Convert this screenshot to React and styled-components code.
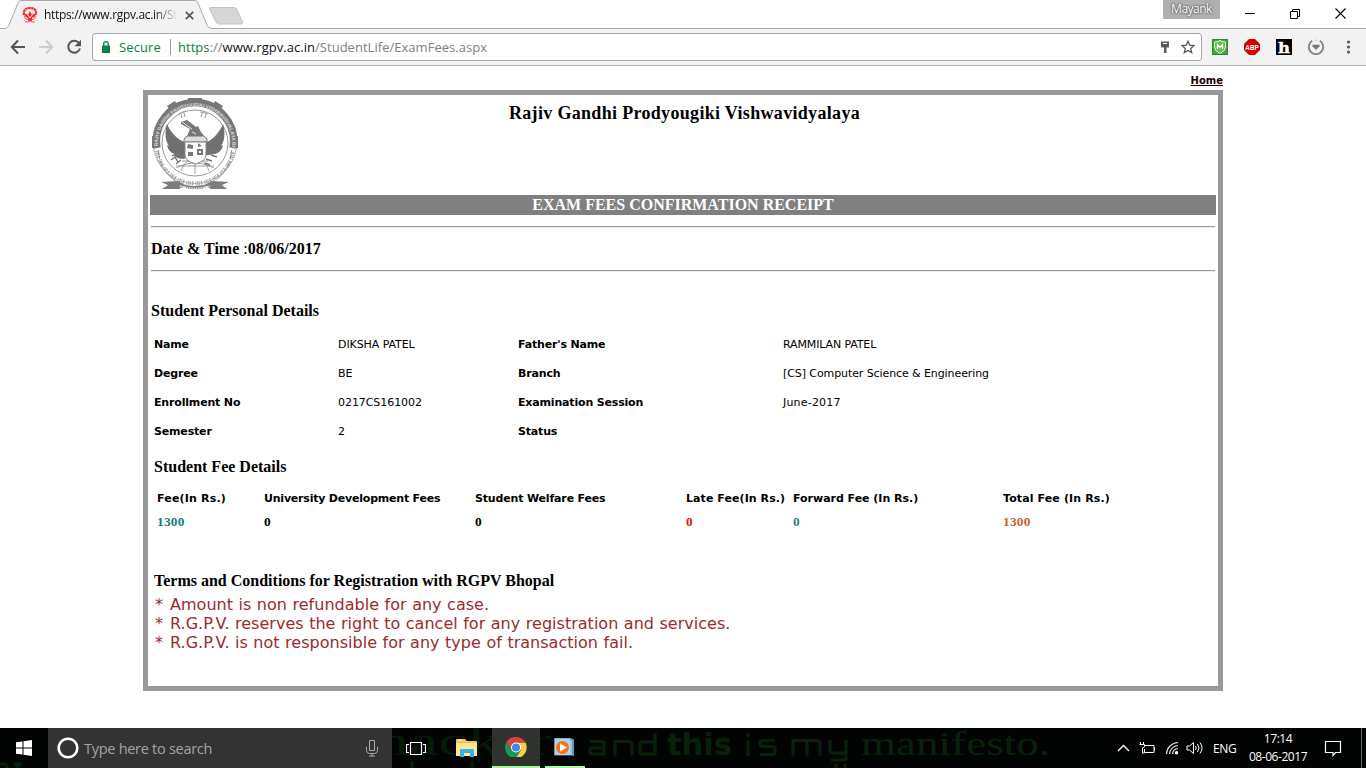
import React from "react";
import styled, { createGlobalStyle } from "styled-components";

const GlobalStyle = createGlobalStyle`
  html, body { margin: 0; padding: 0; background: #fff; }
  body { width: 1366px; height: 768px; overflow: hidden; }
  * { box-sizing: border-box; }
  svg { display: block; flex: none; }
`;

const ui = `"Open Sans", "Noto Sans", sans-serif`;
const serif = `"Liberation Serif", "Times New Roman", serif`;
const verdana = `"DejaVu Sans", Verdana, sans-serif`;

const Screen = styled.div`
  display: flex;
  flex-direction: column;
  width: 1366px;
  height: 768px;
  overflow: hidden;
  white-space: nowrap;
`;

/* ---------- browser chrome ---------- */
const TitleBar = styled.header`
  display: flex;
  height: 29px;
  background: linear-gradient(#fff 28px, #a9a9a9 28px);
`;
const Tab = styled.div`
  position: relative;
  width: 207px;
  height: 29px;
  margin-left: 5px;
  display: flex;
  align-items: center;
  padding: 1px 0 0 17px;
`;
const TabShape = styled.svg`
  position: absolute;
  left: 0;
  top: 0;
`;
const TabContent = styled.div`
  position: relative;
  display: flex;
  align-items: center;
`;
const TabTitle = styled.span`
  width: 133px;
  margin-left: 6px;
  margin-right: 8px;
  overflow: hidden;
  font: 12px/18px ${ui};
  letter-spacing: -0.32px;
  color: #111;
  mask-image: linear-gradient(90deg, #000 110px, transparent 134px);
`;
const NewTab = styled.svg`
  margin: 6px 0 0 -4px;
`;
const UserBadge = styled.div`
  margin-left: auto;
  width: 57px;
  height: 19px;
  background: #b0b0b0;
  color: #fff;
  font: 12px/18px ${ui};
  letter-spacing: -0.5px;
  text-align: center;
  text-shadow: 0 0 2px #444, 0 0 2px #555;
`;
const WindowButton = styled.div`
  width: ${(p) => p.$w}px;
  height: 27px;
  display: flex;
  align-items: center;
  justify-content: center;
  padding-left: ${(p) => p.$pl || 0}px;
`;
const Toolbar = styled.nav`
  display: flex;
  align-items: center;
  height: 37px;
  padding: 0 8px 0 10px;
  background: #f2f2f2;
  border-bottom: 1px solid #b4b4b4;
`;
const NavIcon = styled.svg`
  margin-right: 12px;
`;
const Omnibox = styled.div`
  display: flex;
  align-items: center;
  width: 1110px;
  height: 28px;
  margin-left: -2px;
  padding: 0 6px 0 9px;
  border: 1px solid #a8a8a8;
  border-radius: 3px;
  background: #fff;
  font: 13px/20px ${ui};
`;
const Secure = styled.span`
  width: 51px;
  margin-left: 9px;
  color: #0b8043;
  letter-spacing: 0.1px;
`;
const Divider = styled.i`
  width: 1px;
  height: 16px;
  margin-right: 7px;
  background: #999;
`;
const Url = styled.span`
  flex: 1;
  color: #808080;
  letter-spacing: 0.03px;
  b { font-weight: 400; color: #111; }
  em { font-style: normal; color: #0b8043; }
`;
const OmniIcons = styled.div`
  display: flex;
  align-items: center;
  gap: 11px;
`;
const Extensions = styled.div`
  display: flex;
  align-items: center;
  gap: 16px;
  margin-left: 10px;
`;

/* ---------- page ---------- */
const Page = styled.main`
  display: flex;
  flex-direction: column;
  align-items: center;
  height: 662px;
  background: #fff;
`;
const HomeRow = styled.div`
  display: flex;
  justify-content: flex-end;
  width: 1080px;
  height: 24px;
  padding-top: 7px;
`;
const HomeLink = styled.a`
  font: bold 10px/15px ${verdana};
  color: #200;
  text-decoration: underline;
`;
const Receipt = styled.section`
  width: 1080px;
  height: 601px;
  border: 5px solid #999;
  padding: 0 2px;
  color: #000;
`;
const ReceiptHeader = styled.div`
  display: grid;
  grid-template-columns: 89px 1fr 87px;
  height: 100px;
  padding: 2px 0 0 1px;
`;
const University = styled.h1`
  margin: 6px 0 0;
  font: bold 18px/21px ${serif};
  letter-spacing: 0.32px;
  text-align: center;
`;
const Banner = styled.h2`
  margin: 0 0 11px;
  height: 20px;
  background: #808080;
  color: #fff;
  font: bold 16px/20px ${serif};
  text-align: center;
`;
const Rule = styled.hr`
  margin: 0 1px;
  height: 2px;
  border: 0;
  border-top: 1px solid #999;
  border-bottom: 1px solid #eee;
`;
const DateRow = styled.div`
  height: 42px;
  padding-left: 1px;
  font: 16px/42px ${serif};
`;
const Heading = styled.h3`
  margin: 0;
  padding-left: ${(p) => p.$x}px;
  padding-top: ${(p) => p.$top || 0}px;
  font: bold 16px/${(p) => p.$h}px ${serif};
`;
const Details = styled.dl`
  display: grid;
  grid-template-columns: 184px 180px 265px 1fr;
  grid-auto-rows: 29px;
  margin: 6px 0 0;
  padding-left: 4px;
  font: 11px/29px ${verdana};
`;
const Label = styled.dt`
  font-weight: bold;
  letter-spacing: -0.17px;
`;
const Value = styled.dd`
  margin: 0;
  letter-spacing: ${(p) => p.$ls || 0}px;
`;
const Fees = styled.div`
  display: grid;
  grid-template-columns: 107px 211px 211px 107px 210px 1fr;
  grid-template-rows: 20px 24px;
  padding-left: 7px;
`;
const FeeName = styled.span`
  font: bold 11px/21px ${verdana};
  letter-spacing: ${(p) => p.$ls || 0}px;
`;
const FeeAmount = styled.span`
  margin-top: 4px;
  font: bold 13.33px/20px ${serif};
  letter-spacing: 0.25px;
  color: ${(p) => p.$c || "#000"};
`;
const Terms = styled.ul`
  margin: 4px 0 0;
  padding-left: 5px;
  list-style: none;
  color: #9c2a2f;
  font: 16px/19px ${verdana};
`;
const Term = styled.li`
  display: flex;
  word-spacing: 0.4px;
  letter-spacing: 0.02px;
`;
const Star = styled.span`
  width: 15px;
`;

/* ---------- taskbar ---------- */
const Taskbar = styled.footer`
  position: relative;
  display: flex;
  align-items: stretch;
  height: 40px;
  background: #020403;
  overflow: hidden;
  font-family: ${ui};
`;
const Wallpaper = styled.svg`
  position: absolute;
  left: 0;
  top: 0;
`;
const TaskItem = styled.div`
  position: relative;
  display: flex;
  align-items: center;
  justify-content: center;
  width: ${(p) => p.$w}px;
  margin-left: ${(p) => p.$ml || 0}px;
  background: ${(p) => (p.$active ? "#303230" : "transparent")};
  border-bottom: ${(p) => (p.$open ? "2px solid #a9f5a5" : "0")};
`;
const Search = styled.div`
  position: relative;
  display: flex;
  align-items: center;
  width: 344px;
  padding: 0 13px 0 8px;
  background: #333;
`;
const SearchHint = styled.span`
  flex: 1;
  margin-left: 5px;
  color: #a3a3a3;
  font-size: 14.5px;
  letter-spacing: -0.28px;
`;
const Tray = styled.div`
  position: relative;
  display: flex;
  align-items: center;
  margin-left: auto;
  color: #fff;
`;
const TrayIcon = styled.svg`
  margin-left: ${(p) => p.$ml || 0}px;
`;
const Lang = styled.span`
  width: 25px;
  margin-left: 9px;
  font-size: 12px;
  letter-spacing: -0.4px;
`;
const Clock = styled.div`
  width: 62px;
  margin-left: 9px;
  text-align: center;
  font-size: 12px;
  line-height: 18px;
  letter-spacing: -0.45px;
`;
const DesktopEdge = styled.i`
  width: 5px;
  height: 40px;
  margin-left: 19px;
  border-left: 1px solid #666;
`;

function Emblem() {
  return (
    <svg width="88" height="96" viewBox="0 0 88 96">
      <defs>
        <path id="ringTop" d="M7.200 52A37.200 37.200 0 1 1 80.800 52" />
        <clipPath id="globeClip"><circle cx="44" cy="46" r="31" /></clipPath>
      </defs>
      <path d="M2.500 51A42 42 0 0 0 85.500 51" fill="none" stroke="#aaa" strokeWidth="0.900" />
      <path d="M6 51A38.600 38.600 0 1 1 82 51" fill="none" stroke="#777" strokeWidth="7.500" />
      <path d="M1 39h5l1 12H1zM82 39h5v12h-6zM37 1h14v5H37zM16 9l8-5 2 4-7 5zM64 4l8 5-3 4-7-5z" fill="#777" />
      <text fontFamily="Liberation Sans, sans-serif" fontSize="4.800" fontWeight="700" fill="#ddd">
        <textPath href="#ringTop" startOffset="3">RAJIV GANDHI PRODYOUGIKI VISHWAVIDYALAYA BHOPAL</textPath>
      </text>
      <circle cx="44" cy="46" r="33" fill="#fff" stroke="#999" strokeWidth="1" />
      <path d="M6 54A38.500 38.500 0 0 0 82 54" fill="none" stroke="#a4a4a4" strokeWidth="4" strokeDasharray=".8 .9 1.200 .7 .8 1.100 1.400 2.200" />
      <path d="M7.500 53A36.500 36.500 0 0 0 80.500 53" fill="none" stroke="#888" strokeWidth="0.900" strokeDasharray="9 2 12 2 20 2 31 2" />
      <path d="M28 17q3-2 7-3M30 17l1 4M33 16l1 4M49 15q4 0 8 2M51 16l-1 4M55 17l-1 4" stroke="#999" fill="none" />
      <g clipPath="url(#globeClip)" fill="none" stroke="#888" strokeWidth=".8">
        <path d="M20 74Q44 58 68 74M25 69h38M31 64h26M44 62v16M37 63q-7 7-8 14M51 63q7 7 8 14" />
      </g>
      <path d="M38 46C29 45 21 38 16 27c-3 10-1 18 2 22l-2-1c1 5 4 8 8 9l-2 1c4 4 11 5 15 2zM51 46c9-1 16-8 21-19 3 10 1 18-2 22l2-1c-1 5-4 8-8 9l-13 2z" fill="#707070" />
      <path d="M21 59q5-3 8 0t5-1M20 63l4-3 3 5M25 67l5-4M55 62l6 2M54 66l5 2M60 58l6 2M61 54l6 1" stroke="#777" strokeWidth="1.400" fill="none" />
      <path d="M30 25l6-2 9 7 2-1 3 6 3 4H36l3-7-9-5z" fill="#777" />
      <path d="M31 25l10 7M41 35l4 2" stroke="#fff" strokeWidth=".8" />
      <path d="M33 42l3-3h17l3 3v3H33z" fill="#ddd" stroke="#777" strokeWidth="1" />
      <path d="M34 45h21v13q0 6-10.500 9Q34 64 34 58z" fill="#fff" stroke="#888" strokeWidth="1" />
      <path d="M37 47l5 1v4l-6-1zM46 52h6v6h-6zM37 55h5v4h-5zM47 46l4 3-4 1z" fill="#777" />
      <path d="M48 54h2v2h-2z" fill="#fff" />
      <path d="M10 85l17-1 9 5h16l9-5 17 1-7 3 5 4H60l-5-3-4 3H37l-4-3-5 3H11l6-4z" fill="#7d7d7d" />
      <path d="M29 89q15 5 30 0" stroke="#ddd" strokeWidth="2" fill="none" strokeDasharray="1.500 .8" />
    </svg>
  );
}

const Svg = ({ w, h, children }) => (
  <svg width={w} height={h} viewBox={`0 0 ${w} ${h}`}>{children}</svg>
);

function BrowserTop() {
  return (
    <>
      <TitleBar>
        <Tab>
          <TabShape width="207" height="29">
            <path d="M0 28.500C2 28 3 27 4 25L13 3Q14 .5 16 .5H190Q192 .5 193 3L202 25Q203 28 207 28.500V29H0z" fill="#f2f2f2" />
            <path d="M0 28.500C2 28 3 27 4 25L13 3Q14 .5 16 .5H190Q192 .5 193 3L202 25Q203 28 207 28.500" fill="none" stroke="#a9a9a9" />
          </TabShape>
          <TabContent>
            <Svg w={16} h={16}>
              <path d="M2 8C1 3 4 1 8 1s7 2 6 7" fill="none" stroke="#f22" strokeWidth="2.200" strokeDasharray="2.500 .5" />
              <path d="M2 6l4 2 2-4 2 4 4-2q0 4-4 5v3H6v-3Q2 10 2 6z" fill="#f22" />
              <path d="M2 9q1 4 5 4M14 9q-1 4-5 4M3 15h3l2-1 2 1h3" stroke="#f55" fill="none" />
              <path d="M6 8l2 3 2-3" stroke="#fff" fill="none" />
            </Svg>
            <TabTitle>https://www.rgpv.ac.in/StudentLife</TabTitle>
            <Svg w={9} h={9}>
              <path d="M.8.8l7.400 7.400M8.200.8L.8 8.200" stroke="#555" strokeWidth="1.700" />
            </Svg>
          </TabContent>
        </Tab>
        <NewTab width="37" height="20">
          <path d="M3 1.500H26Q28 1.500 29 3.500L34.500 16Q35 18 33 18H11Q9 18 8 16L1.500 3Q1 1.500 3 1.500z" fill="#d6d6d6" stroke="#c4c4c4" />
        </NewTab>
        <UserBadge>Mayank</UserBadge>
        <WindowButton $w={60}><Svg w={10} h={10}><path d="M0 4.500h10" stroke="#000" /></Svg></WindowButton>
        <WindowButton $w={30}><Svg w={10} h={10}><path d="M.5 2.500h7v7h-7zM2.500 2.500v-2h7v7h-2" fill="none" stroke="#000" /></Svg></WindowButton>
        <WindowButton $w={56} $pl={5}><Svg w={11} h={11}><path d="M.5.5l10 10M10.500.5l-10 10" stroke="#000" strokeWidth="1.100" /></Svg></WindowButton>
      </TitleBar>
      <Toolbar>
        <NavIcon width="16" height="16"><path d="M15 8H2M8 1.500L1.800 8 8 14.500" fill="none" stroke="#555" strokeWidth="2" /></NavIcon>
        <NavIcon width="16" height="16"><path d="M1 8h13M8 1.500L14.200 8 8 14.500" fill="none" stroke="#ccc" strokeWidth="2" /></NavIcon>
        <NavIcon width="16" height="16"><path d="M13 4A6 6 0 1 0 14 9.500" fill="none" stroke="#555" strokeWidth="2" /><path d="M15 .8v6.500H8.500z" fill="#555" /></NavIcon>
        <Omnibox>
          <Svg w={8} h={12}><path d="M0 4.500h8V12H0z" fill="#0b8043" /><path d="M1.700 5V3a2.300 2.300 0 0 1 4.600 0v2" fill="none" stroke="#0b8043" strokeWidth="1.300" /></Svg>
          <Secure>Secure</Secure>
          <Divider />
          <Url><em>https</em>://<b>www.rgpv.ac.in</b>/StudentLife/ExamFees.aspx</Url>
          <OmniIcons>
            <Svg w={10} h={14}><path d="M1 1.500h8v6H6.500V13H4V7.500H1z" fill="#5a5a5a" /><path d="M3 3.500h4" stroke="#fff" /></Svg>
            <Svg w={14} h={14}><path d="M7 1.200l1.700 4 4.300.4-3.300 2.800 1 4.200L7 10.400l-3.700 2.200 1-4.200L1 5.600l4.300-.4z" fill="none" stroke="#5a5a5a" strokeWidth="1.300" /></Svg>
          </OmniIcons>
        </Omnibox>
        <Extensions>
          <Svg w={16} h={16}>
            <path d="M0 0h16v16H0z" fill="#3ba935" /><path d="M.5.5h15v15H.5z" fill="none" stroke="#318a32" />
            <path d="M8 1.500q3 1.500 5.500 1.500v5q0 4-5.500 6.500Q2.500 12 2.500 8V3Q5 3 8 1.500z" fill="#69bd57" stroke="#e6f5df" />
            <path d="M5.500 10V5.500l2.500 3 2.500-3V10" fill="none" stroke="#fff" strokeWidth="1.300" />
          </Svg>
          <Svg w={16} h={16}>
            <path d="M5 0h6l5 5v6l-5 5H5l-5-5V5z" fill="#d40000" />
            <text x="1.300" y="10.900" textLength="13.500" lengthAdjust="spacingAndGlyphs" fontFamily="Liberation Sans, sans-serif" fontWeight="700" fontSize="8" fill="#fff">ABP</text>
          </Svg>
          <Svg w={16} h={16}>
            <path d="M0 0h16v16H0z" />
            <text x="2" y="13.500" textLength="12" lengthAdjust="spacingAndGlyphs" fontFamily="DejaVu Serif, serif" fontWeight="700" fontSize="15" fill="#fff" stroke="#fff" strokeWidth=".4">h</text>
          </Svg>
          <Svg w={16} h={16}>
            <path d="M4.200 1.800A7.200 7.200 0 1 0 11.800 1.800" fill="none" stroke="#85858c" strokeWidth="1.900" />
            <path d="M6.500 1.200h3" fill="none" stroke="#ccc" />
            <path d="M4.500 5.800h7v1.500L8 11 4.500 7.300z" fill="#77777e" />
          </Svg>
          <Svg w={16} h={16}><g fill="#5a5a5a"><circle cx="8.500" cy="3" r="1.600" /><circle cx="8.500" cy="8" r="1.600" /><circle cx="8.500" cy="13" r="1.600" /></g></Svg>
        </Extensions>
      </Toolbar>
    </>
  );
}

const details = [
  ["Name", "DIKSHA PATEL", -0.08, "Father's Name", "RAMMILAN PATEL", -0.13],
  ["Degree", "BE", 0, "Branch", "[CS] Computer Science & Engineering", -0.09],
  ["Enrollment No", "0217CS161002", -0.06, "Examination Session", "June-2017", 0.2],
  ["Semester", "2", 0, "Status", "", 0],
];
const fees = [
  ["Fee(In Rs.)", 0.18, "1300", "#147c80"],
  ["University Development Fees", -0.21, "0"],
  ["Student Welfare Fees", -0.16, "0"],
  ["Late Fee(In Rs.)", 0.07, "0", "#e8160c"],
  ["Forward Fee (In Rs.)", -0.02, "0", "#2f7f7f"],
  ["Total Fee (In Rs.)", 0.12, "1300", "#c8602e"],
];
const terms = [
  "Amount is non refundable for any case.",
  "R.G.P.V. reserves the right to cancel for any registration and services.",
  "R.G.P.V. is not responsible for any type of transaction fail.",
];

function ReceiptPage() {
  return (
    <Page>
      <HomeRow><HomeLink>Home</HomeLink></HomeRow>
      <Receipt>
        <ReceiptHeader>
          <Emblem />
          <University>Rajiv Gandhi Prodyougiki Vishwavidyalaya</University>
        </ReceiptHeader>
        <Banner>EXAM FEES CONFIRMATION RECEIPT</Banner>
        <Rule />
        <DateRow><b>Date &amp; Time</b> :<b>08/06/2017</b></DateRow>
        <Rule />
        <Heading $x={1} $top={26} $h={26}>Student Personal Details</Heading>
        <Details>
          {details.map(([a, b, bls, c, d, dls]) => (
            <React.Fragment key={a}>
              <Label>{a}</Label><Value $ls={bls}>{b}</Value>
              <Label>{c}</Label><Value $ls={dls}>{d}</Value>
            </React.Fragment>
          ))}
        </Details>
        <Heading $x={4} $h={42}>Student Fee Details</Heading>
        <Fees>
          {fees.map(([name, ls]) => <FeeName key={name} $ls={ls}>{name}</FeeName>)}
          {fees.map(([name, , amount, color]) => <FeeAmount key={name} $c={color}>{amount}</FeeAmount>)}
        </Fees>
        <Heading $x={4} $top={39} $h={20}>Terms and Conditions for Registration with RGPV Bhopal</Heading>
        <Terms>{terms.map((t) => <Term key={t}><Star>*</Star>{t}</Term>)}</Terms>
      </Receipt>
    </Page>
  );
}

function WindowsTaskbar() {
  return (
    <Taskbar>
      <Wallpaper width="1366" height="40">
        <g fill="#062309" fontFamily="Liberation Serif, serif">
          <text x="376" y="27" fontSize="40" fill="#051b08" textLength="176" lengthAdjust="spacingAndGlyphs">hacker</text>
          <text x="667" y="27" fontSize="31" fontWeight="700" fontFamily="DejaVu Sans, sans-serif" textLength="65" lengthAdjust="spacingAndGlyphs">this</text>
          <text x="861" y="27" fontSize="34" textLength="189" lengthAdjust="spacingAndGlyphs">manifesto.</text>
        </g>
        <path d="M0 36h5l3 4M14 36h6l-4 4M412 33v7M472 33v7" stroke="#062309" strokeWidth="3" fill="none" />
        <g fill="none" stroke="#062309" strokeWidth="3.200">
          <path d="M590 13.500h12q2 0 2 2V26h-13q-1 0-1-2v-2q0-2 2-2h12M615 27.500v-14h13q4 0 4 4v10M655 5v21h-13q-2 0-2-2v-8q0-2 2-2h13M748 12v16M748 5v4M775 12.500h-13q-2 0-2 2v2q0 2 2 2h11q2 0 2 2v4q0 2-2 2h-13M793 27.500v-15h24q3 0 3 3v12M807 12.500v15M830 12v10q0 3 3 3h12M846 12v18q0 2-2 2h-13" />
          <path d="M836 36v4M845 36v4" />
        </g>
      </Wallpaper>
      <TaskItem $w={48}>
        <Svg w={16} h={16}><path d="M0 2.300L6.500 1.400V7.500H0zM7.500 1.200L16 0v7.500H7.500zM0 8.500h6.500v6.100L0 13.700zM7.500 8.500H16V16l-8.500-1.200z" fill="#fff" /></Svg>
      </TaskItem>
      <Search>
        <Svg w={23} h={24}><circle cx="12" cy="12" r="9.300" fill="none" stroke="#fff" strokeWidth="2.600" /></Svg>
        <SearchHint>Type here to search</SearchHint>
        <Svg w={14} h={18}><path d="M4.500 1.500h5v10h-5zM1.500 8v3.500q0 3 3 3h5q3 0 3-3V8M7 14.500v3M4 17h6" fill="none" stroke="#aaa" /></Svg>
      </Search>
      <TaskItem $w={48}>
        <Svg w={20} h={15}><path d="M4.500 1.500h11v12h-11zM3 3.500H.5v8H3M17 3.500h2.500v8H17" fill="none" stroke="#fff" strokeWidth="1.200" /></Svg>
      </TaskItem>
      <TaskItem $w={48} $ml={3}>
        <Svg w={22} h={20}>
          <path d="M0 2q0-1 1-1h8l2 2h9q1 0 1 1v14H0z" fill="#f4c64d" /><path d="M0 5h21v13H0z" fill="#ffe795" />
          <path d="M4 19v-7q0-1 1-1h12q1 0 1 1v7h-4v-4H8v4z" fill="#35b3e8" /><path d="M2 2h4" stroke="#fff" />
        </Svg>
      </TaskItem>
      <TaskItem $w={48} $ml={1} $active $open>
        <Svg w={22} h={20}>
          <g transform="translate(0 -.5)">
            <path d="M1.500 5.500A11 11 0 0 0 10.500 22L15.800 13.500 11 11 6.200 13.700z" fill="#0f9d58" />
            <path d="M20.500 6H11l4.800 7.700L10.500 22A11 11 0 0 0 20.500 6z" fill="#ffcd40" />
            <path d="M1.500 5.500L6.200 13.500 11 6h9.500A11 11 0 0 0 1.500 5.500z" fill="#db4437" />
            <circle cx="11" cy="11" r="5" fill="#fff" /><circle cx="11" cy="11" r="4" fill="#4285f4" />
          </g>
        </Svg>
      </TaskItem>
      <TaskItem $w={40} $ml={5} $open>
        <Svg w={22} h={18}>
          <path d="M0 0h17l3 1.500V18l-3-.5H0z" fill="#5698bd" /><path d="M1 .5h15v16.500H1z" fill="#a5d5ed" /><path d="M17 2v15" stroke="#def" />
          <circle cx="8.500" cy="9.500" r="7" fill="#f37321" stroke="#d8e6ed" strokeWidth=".8" /><path d="M6 5.500l7 4-7 4z" fill="#fff" />
        </Svg>
      </TaskItem>
      <Tray>
        <TrayIcon width="13" height="8"><path d="M1 7l5.500-5.500L12 7" fill="none" stroke="#fff" strokeWidth="1.300" /></TrayIcon>
        <TrayIcon $ml={9} width="17" height="14"><path d="M6 4.500h9v7H5.500V8M15.500 6.500v3M1.500 1v2M4.500 1v2M.5 3.500h5v2q0 1-2 1.500v5h2" fill="none" stroke="#fff" /></TrayIcon>
        <TrayIcon $ml={9} width="14" height="14">
          <path d="M1.500 13A12 12 0 0 1 13 1.500M4.500 13A9 9 0 0 1 13 4.500M7.500 13A6 6 0 0 1 13 7.500" fill="none" stroke="#ddd" strokeWidth="1.200" /><circle cx="11.500" cy="11.800" r="1.700" fill="#fff" />
        </TrayIcon>
        <TrayIcon $ml={7} width="18" height="14"><path d="M1 5h2.500l4-3.500v11L3.500 9H1zM9.500 5q1.500 2 0 4M11.500 3q3 4 0 8M14 1.500q4 5.500 0 11" fill="none" stroke="#fff" /></TrayIcon>
        <Lang>ENG</Lang>
        <Clock>17:14<br />08-06-2017</Clock>
        <TrayIcon $ml={15} width="18" height="18"><path d="M1.500 2.500h15v11h-5l-2.500 3v-3H1.500z" fill="none" stroke="#fff" strokeWidth="1.200" /></TrayIcon>
        <DesktopEdge />
      </Tray>
    </Taskbar>
  );
}

export default function App() {
  return (
    <Screen>
      <GlobalStyle />
      <BrowserTop />
      <ReceiptPage />
      <WindowsTaskbar />
    </Screen>
  );
}
